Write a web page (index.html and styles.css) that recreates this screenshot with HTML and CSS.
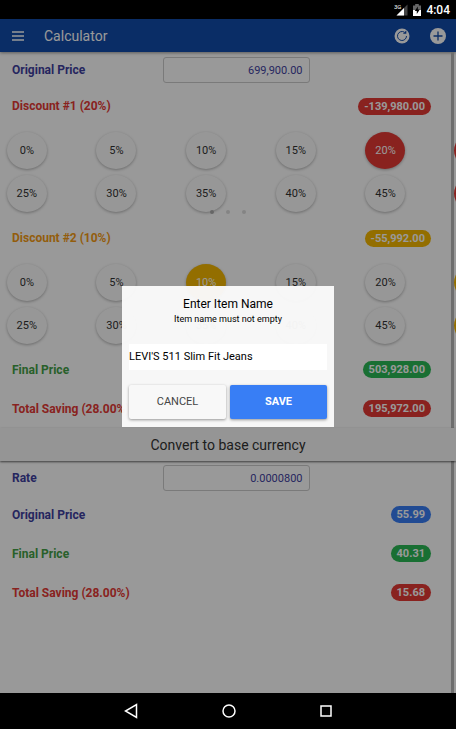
FILE: index.html
```
<!DOCTYPE html>
<html lang="en">
<head>
  <meta charset="UTF-8">
  <meta name="viewport" content="width=device-width, initial-scale=1">
  <title>Calculator</title>
  <link rel="stylesheet" href="styles.css">
</head>
<body>
  <div class="status-bar">
    <svg width="14" height="12" viewBox="0 0 14 12">
      <path d="M13.5 0.5v11h-11z" fill="#444"/>
      <path d="M10 4v7.5H2.5z" fill="#fff"/>
      <text x="0" y="5" class="net-type">3G</text>
    </svg>
    <svg width="8" height="12" viewBox="0 0 8 12">
      <path d="M0 1.5h2.2V0h3.6v1.5H8V6H0z" fill="#666"/>
      <path d="M0 6h8v6H0z" fill="#fff"/>
      <path d="M4.8 2.5L1.8 7h2v3l3-4.5h-2z" fill="#000"/>
    </svg>
    <span class="clock">4:04</span>
  </div>

  <div class="app">
    <header class="toolbar">
      <button class="icon-button" aria-label="Menu">
        <svg width="12" height="10" viewBox="0 0 12 10" stroke="#fff" stroke-width="1.3">
          <path d="M0 1h12M0 5h12M0 9h12"/>
        </svg>
      </button>
      <h1>Calculator</h1>
      <button class="icon-button" aria-label="Reset">
        <svg width="16" height="16" viewBox="0 0 16 16" fill="none">
          <circle cx="8" cy="8" r="7.5" fill="#fff"/>
          <path d="M12.5 8A4.5 4.5 0 1 1 10.4 4.2" stroke="#124baa" stroke-width="1"/>
          <path d="M8.9 5.8h3.4V2.4z" fill="#124baa"/>
        </svg>
      </button>
      <button class="icon-button" aria-label="Add">
        <svg width="16" height="16" viewBox="0 0 16 16">
          <circle cx="8" cy="8" r="8" fill="#fff"/>
          <path d="M8 3.5v9M3.5 8h9" stroke="#124baa" stroke-width="1.3"/>
        </svg>
      </button>
    </header>

    <main class="content">
      <div class="row">
        <label class="label primary" for="price">Original Price</label>
        <input class="amount" type="text" id="price" value="699,900.00">
      </div>

      <div class="row">
        <span class="label danger">Discount #1 (20%)</span>
        <span class="badge bg-danger">-139,980.00</span>
      </div>
      <div class="slides">
        <div class="percents">
          <button>0%</button>
          <button>5%</button>
          <button>10%</button>
          <button>15%</button>
          <button class="bg-danger">20%</button>
          <span class="next bg-danger"></span>
          <button>25%</button>
          <button>30%</button>
          <button>35%</button>
          <button>40%</button>
          <button>45%</button>
          <span class="next bg-danger"></span>
        </div>
        <div class="pager"><i class="active"></i><i></i><i></i></div>
      </div>

      <div class="row">
        <span class="label warning">Discount #2 (10%)</span>
        <span class="badge bg-warning">-55,992.00</span>
      </div>
      <div class="slides">
        <div class="percents last">
          <button>0%</button>
          <button>5%</button>
          <button class="bg-warning">10%</button>
          <button>15%</button>
          <button>20%</button>
          <span class="next bg-warning"></span>
          <button>25%</button>
          <button>30%</button>
          <button>35%</button>
          <button>40%</button>
          <button>45%</button>
          <span class="next bg-warning"></span>
        </div>
      </div>

      <div class="row tall">
        <span class="label success">Final Price</span>
        <span class="badge bg-success">503,928.00</span>
      </div>
      <div class="row tall">
        <span class="label danger">Total Saving (28.00%)</span>
        <span class="badge bg-danger">195,972.00</span>
      </div>

      <button class="convert">Convert to base currency</button>

      <div class="row rate">
        <label class="label primary" for="rate">Rate</label>
        <input class="amount" type="text" id="rate" value="0.0000800">
      </div>
      <div class="row tall">
        <span class="label primary">Original Price</span>
        <span class="badge bg-primary">55.99</span>
      </div>
      <div class="row tall">
        <span class="label success">Final Price</span>
        <span class="badge bg-success">40.31</span>
      </div>
      <div class="row tall">
        <span class="label danger">Total Saving (28.00%)</span>
        <span class="badge bg-danger">15.68</span>
      </div>
    </main>

    <div class="backdrop">
      <form class="popup" role="dialog" aria-labelledby="popup-title">
        <h2 id="popup-title">Enter Item Name</h2>
        <label for="item-name">Item name must not empty</label>
        <input type="text" id="item-name" value="LEVI'S 511 Slim Fit Jeans">
        <div class="popup-buttons">
          <button type="button">CANCEL</button>
          <button type="button" class="save">SAVE</button>
        </div>
      </form>
    </div>
  </div>

  <nav class="nav-bar">
    <button class="icon-button" aria-label="Back">
      <svg width="14" height="16" viewBox="0 0 14 16"><path d="M12.5 1.5v13L1.5 8z"/></svg>
    </button>
    <button class="icon-button" aria-label="Home">
      <svg width="14" height="14" viewBox="0 0 14 14"><circle cx="7" cy="7" r="6"/></svg>
    </button>
    <button class="icon-button" aria-label="Recent apps">
      <svg width="12" height="12" viewBox="0 0 12 12"><path d="M1 1h10v10H1z"/></svg>
    </button>
  </nav>
</body>
</html>
```
FILE: styles.css
```
* {
  box-sizing: border-box;
}
body {
  margin: 0;
  min-height: 100vh;
  display: flex;
  flex-direction: column;
  font-family: Roboto, sans-serif;
  font-size: 12px;
  background-color: #000;
}
button,
input {
  font-family: inherit;
}
button {
  padding: 0;
  border: none;
  cursor: pointer;
}
h1,
h2 {
  margin: 0;
  font-weight: normal;
}
svg {
  display: block;
}

/* system bars */
.status-bar {
  height: 19px;
  padding: 0 6px;
  display: flex;
  align-items: center;
  justify-content: flex-end;
  gap: 5px;
  color: #fff;
}
.net-type {
  font-size: 6px;
  fill: #fff;
}
.clock {
  font-size: 12px;
  font-weight: 500;
}
.nav-bar {
  height: 36px;
  display: flex;
  align-items: center;
  justify-content: center;
  gap: 84px;
}
.nav-bar svg {
  fill: none;
  stroke: #fff;
  stroke-width: 1.5;
}
.icon-button {
  background: none;
}

.app {
  position: relative;
  flex: 1;
  display: flex;
  flex-direction: column;
  background-color: #fff;
}
.toolbar {
  height: 33px;
  padding: 0 10px 0 12px;
  display: flex;
  align-items: center;
  background-color: #124baa;
  color: #fff;
  box-shadow: 0 1px 3px rgba(0,0,0,0.4);
}
.toolbar h1 {
  flex: 1;
  margin-left: 20px;
  font-size: 14px;
}
.toolbar .icon-button + .icon-button {
  margin-left: 20px;
}

/* scroll indicator on the right edge */
.content {
  position: relative;
  flex: 1;
}
.content::after {
  content: "";
  position: absolute;
  top: 0;
  right: 2px;
  bottom: 0;
  width: 3px;
  background-color: #b8b8b8;
}

.row {
  height: 36px;
  padding: 0 25px 0 12px;
  display: flex;
  align-items: center;
  justify-content: space-between;
}
.row.tall {
  height: 39px;
}
.row.rate {
  height: 34px;
}
.label {
  flex: 1;
  font-weight: bold;
}
.amount {
  width: 35%;
  height: 26px;
  margin-right: 29%;
  padding: 0 6px;
  border: 1px solid #ccc;
  border-radius: 3px;
  background-color: transparent;
  color: #3f3f9f;
  font-size: 11px;
  text-align: right;
}
.badge {
  padding: 0 6px;
  border-radius: 9px;
  color: #fff;
  font-size: 11px;
  font-weight: bold;
  line-height: 17px;
}
.primary {
  color: #3f3f9f;
}
.danger {
  color: #e53935;
}
.warning {
  color: #f59b14;
}
.success {
  color: #43a047;
}
.bg-primary {
  background-color: #387ef5;
}
.bg-danger {
  background-color: #e53935;
}
.bg-warning {
  background-color: #f5b800;
}
.bg-success {
  background-color: #2bb956;
}

/* percent buttons, the next slide peeks in on the right */
.slides {
  position: relative;
  overflow: hidden;
}
.percents {
  margin: 0 -64px 0 -18px;
  padding: 5px 0;
  display: grid;
  grid-template-columns: repeat(6, 1fr);
  grid-auto-rows: 43px;
  place-items: center;
}
.percents.last {
  padding-bottom: 3px;
}
.percents button {
  width: 40px;
  height: 37px;
  border-radius: 50%;
  background-color: #fcfcfc;
  color: #333;
  font-size: 11px;
  box-shadow: 0 1px 3px rgba(0,0,0,0.3);
}
.percents .bg-danger {
  background-color: #e53935;
  color: #fff;
}
.percents .bg-warning {
  background-color: #f5b800;
  color: #fff;
}
.next {
  width: 42px;
  height: 37px;
  border-radius: 50%;
}
.pager {
  position: absolute;
  left: 0;
  right: 0;
  bottom: 6px;
  display: flex;
  justify-content: center;
  gap: 12px;
}
.pager i {
  width: 4px;
  height: 4px;
  border-radius: 50%;
  background-color: #ddd;
}
.pager .active {
  background-color: #aaa;
}

.convert {
  position: relative;
  z-index: 1;
  display: block;
  width: 100%;
  height: 33px;
  background-color: #f8f8f8;
  color: #333;
  font-size: 14px;
  box-shadow: 0 1px 2px rgba(0,0,0,0.6);
}

.backdrop {
  position: absolute;
  inset: 0;
  z-index: 2;
  display: flex;
  align-items: center;
  justify-content: center;
  background-color: rgba(0,0,0,0.4);
}
.popup {
  width: 212px;
  padding: 10px 7px 8px;
  display: flex;
  flex-direction: column;
  background-color: rgba(250,250,250,0.97);
  color: #000;
  text-align: center;
}
.popup h2 {
  font-size: 12px;
  line-height: 16px;
}
.popup label {
  font-size: 9px;
  line-height: 14px;
}
.popup input {
  height: 26px;
  margin: 18px 0 15px;
  padding: 0;
  border: none;
  background-color: #fff;
  color: #000;
  font-size: 11px;
}
.popup-buttons {
  display: flex;
  gap: 4px;
}
.popup-buttons button {
  flex: 1;
  height: 34px;
  border-radius: 2px;
  background-color: #f8f8f8;
  color: #444;
  font-size: 11px;
  box-shadow: 0 1px 3px rgba(0,0,0,0.4);
}
.popup-buttons .save {
  background-color: #387ef5;
  color: #fff;
  font-weight: bold;
}
```
